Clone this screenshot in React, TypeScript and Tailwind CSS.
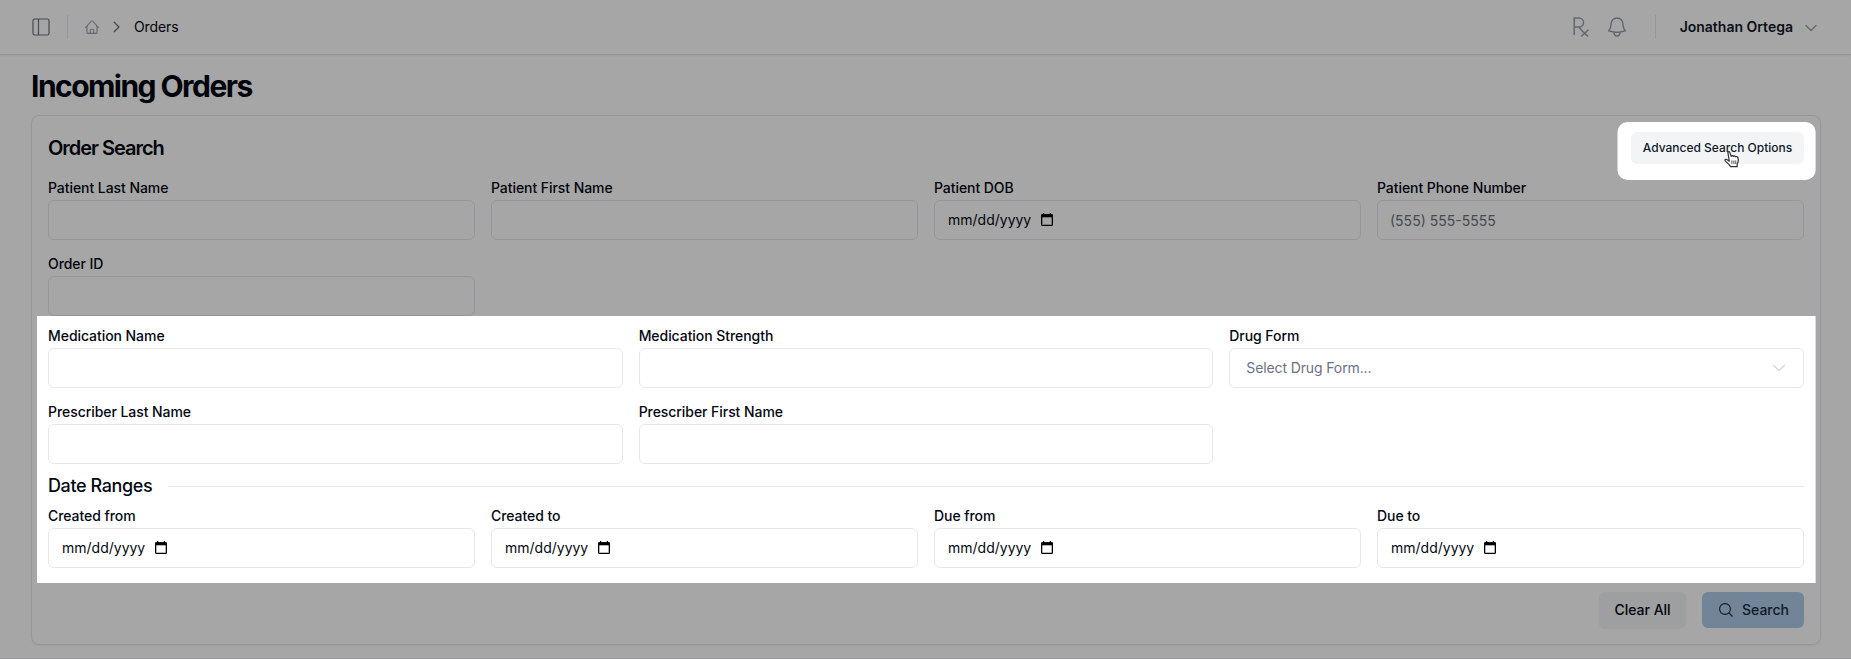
import React from "react";
import { ChevronDown } from "lucide-react";

const boxClass = "flex h-10 w-full items-center rounded-md border border-gray-200 bg-white text-sm";

function Label({ children }: { children: React.ReactNode }) {
  return <label className="h-5 text-sm font-medium leading-5 tracking-[-0.06px]">{children}</label>;
}

function Field({ label, placeholder }: { label: string; placeholder?: string }) {
  return (
    <div className="flex flex-col gap-0.5">
      <Label>{label}</Label>
      <input
        type="text"
        placeholder={placeholder}
        className={boxClass + " px-3 text-gray-950 placeholder:text-gray-500"}
      />
    </div>
  );
}

function DateField({ label }: { label: string }) {
  return (
    <div className="flex flex-col gap-0.5">
      <Label>{label}</Label>
      <div className={boxClass + " pl-[13px]"}>
        <span className="w-[93px] whitespace-nowrap">mm/dd/yyyy</span>
        <svg viewBox="0 0 12 13" className="-mt-px h-[13px] w-3 text-black" fill="none">
          <path d="M2.6 0v2M9.4 0v2" stroke="currentColor" strokeWidth="1.3" />
          <rect x="0.65" y="1.8" width="10.7" height="10.5" rx="0.6" stroke="currentColor" strokeWidth="1.3" />
          <path d="M.6 1.3h10.8v3H.6z" fill="currentColor" />
        </svg>
      </div>
    </div>
  );
}

function PanelIcon() {
  return (
    <svg viewBox="0 0 18 18" className="size-[18px] text-gray-500" fill="none" stroke="currentColor" strokeWidth="1.2">
      <rect x="1" y="1" width="16" height="16" rx="1.8" />
      <path d="M6.5 1v16" />
    </svg>
  );
}

function HomeIcon() {
  return (
    <svg viewBox="0 0 16 16" className="size-4 text-gray-400" fill="none" stroke="currentColor" strokeWidth="1.1" strokeLinecap="round" strokeLinejoin="round">
      <path d="M1.5 8.6 7.4 2a.8.8 0 0 1 1.2 0l5.9 6.6" />
      <path d="M3 7.2v6.2a1 1 0 0 0 1 1h8a1 1 0 0 0 1-1V7.2" />
      <path d="M6.3 14.3v-3a1.1 1.1 0 0 1 1.1-1.1h1.2a1.1 1.1 0 0 1 1.1 1.1v3" />
    </svg>
  );
}

function RxIcon() {
  return (
    <svg viewBox="0 0 16 20" className="h-5 w-4" fill="none" stroke="currentColor" strokeWidth="1.5">
      <path d="M1.2 18V1H6a4.5 4.5 0 0 1 0 9H1.2M6 10l3.6 4.4M8 12.7l7 6.8M15.4 12.7l-7.2 6.8" />
    </svg>
  );
}

function BellIcon() {
  return (
    <svg viewBox="0 0 24 24" className="size-6" fill="none" stroke="currentColor" strokeWidth="1.5" strokeLinecap="round" strokeLinejoin="round">
      <path d="M14.857 17.082a23.85 23.85 0 0 0 5.454-1.31A8.97 8.97 0 0 1 18 9.75V9A6 6 0 0 0 6 9v.75a8.97 8.97 0 0 1-2.312 6.022c1.733.64 3.56 1.085 5.455 1.31m5.714 0a24.3 24.3 0 0 1-5.714 0m5.714 0a3 3 0 1 1-5.714 0" />
    </svg>
  );
}

function HandCursor() {
  return (
    <svg viewBox="0 0 17 18" className="absolute left-[93px] top-[19px] h-[17px] w-4" fill="white" stroke="#333" strokeWidth="1.3" strokeLinejoin="round">
      <path d="M4.2 1.8C3.8.6 5.6.2 6.1 1.4L7.8 5.8C8 4.6 9.6 4.6 10 5.8C10.4 4.8 11.9 5 12.2 6.2C12.8 5.5 14.4 5.8 14.7 7.2C15.6 9.5 15.4 11.5 14 13.6V16.6H7L5.4 14.4L1.3 10.4C.5 9.3 1.8 8.2 3 9.1L5.6 10.8Z" />
      <path d="M8.4 10v3.8M10.5 10v3.8M12.5 10v3.8" strokeWidth=".9" />
    </svg>
  );
}

export default function App() {
  return (
    <div className="relative h-[659px] w-full overflow-hidden bg-white font-['Inter',sans-serif] text-gray-950">
      <header className="flex h-[55px] items-center border-b border-gray-200 pl-8 pr-[30px] shadow-xs">
        <PanelIcon />
        <div className="ml-[17px] h-6 w-px bg-gray-200" />
        <div className="ml-4"><HomeIcon /></div>
        <svg viewBox="0 0 8 12" className="ml-[13px] h-3 w-2 text-gray-500" fill="none" stroke="currentColor" strokeWidth="1.3" strokeLinecap="round" strokeLinejoin="round">
          <path d="m1.2 1.2 4.8 4.8-4.8 4.8" />
        </svg>
        <span className="ml-[13px] text-sm tracking-[-0.1px]">Orders</span>
        <div className="ml-auto flex items-center">
          <div className="text-gray-400"><RxIcon /></div>
          <div className="ml-4 text-gray-400"><BellIcon /></div>
          <div className="ml-[26px] h-6 w-px bg-gray-200" />
          <span className="ml-6 text-sm font-semibold text-gray-900">Jonathan Ortega</span>
          <ChevronDown className="ml-2 mt-0.5 size-5 text-gray-400" strokeWidth={1.6} />
        </div>
      </header>

      <main className="pl-[31px] pr-[30px] pt-3">
        <h1 className="h-12 text-[30px] font-bold leading-[38px] tracking-[-1.54px]">Incoming Orders</h1>

        <section className="h-[530px] rounded-lg border border-gray-200 px-4 pt-4 shadow-xs">
          <div className="flex h-[46px] items-start justify-between">
            <h2 className="text-xl font-semibold leading-8 tracking-[-1.02px]">Order Search</h2>
            <button className="relative h-8 w-[173px] rounded-md bg-gray-100 text-xs font-medium text-gray-900">
              Advanced Search Options
              <HandCursor />
            </button>
          </div>

          <div className="grid grid-cols-4 gap-x-4 gap-y-3.5">
            <Field label="Patient Last Name" />
            <Field label="Patient First Name" />
            <DateField label="Patient DOB" />
            <Field label="Patient Phone Number" placeholder="(555) 555-5555" />
            <Field label="Order ID" />
          </div>

          <div className="mt-2.5 grid grid-cols-3 gap-x-4 gap-y-3.5">
            <Field label="Medication Name" />
            <Field label="Medication Strength" />
            <div className="flex flex-col gap-0.5">
              <Label>Drug Form</Label>
              <button className={boxClass + " justify-between pl-4 pr-[13px] tracking-[-0.12px] text-gray-500"}>
                Select Drug Form...
                <ChevronDown className="size-[22px] text-gray-300" strokeWidth={1.2} />
              </button>
            </div>
            <Field label="Prescriber Last Name" />
            <Field label="Prescriber First Name" />
          </div>

          <div className="mt-2 flex h-7 items-center gap-4">
            <h3 className="text-lg font-medium leading-7 tracking-[-0.4px]">Date Ranges</h3>
            <div className="h-px flex-1 bg-gray-200" />
          </div>

          <div className="mt-1.5 grid grid-cols-4 gap-x-4">
            <DateField label="Created from" />
            <DateField label="Created to" />
            <DateField label="Due from" />
            <DateField label="Due to" />
          </div>

          <div className="mt-6 flex justify-end gap-4">
            <button className="h-9 w-[87px] rounded-md bg-gray-100 text-sm font-medium shadow-xs">Clear All</button>
            <button className="flex h-9 w-[102px] items-center rounded-md bg-[#afcbe8] pl-4 text-sm font-medium text-gray-800">
              <svg viewBox="0 0 16 16" className="size-4" fill="none" stroke="currentColor" strokeWidth="1.1">
                <circle cx="7" cy="7" r="5.4" />
                <path d="m10.9 10.9 3.6 3.6" />
              </svg>
              <span className="ml-2">Search</span>
            </button>
          </div>
        </section>
        <div className="-mx-8 mt-[13px] h-px bg-gray-200" />
      </main>

      <div className="pointer-events-none absolute inset-0 bg-black/35 [clip-path:path(evenodd,'M0_0H1851V659H0ZM37_316H1815.6V583H37ZM1627.5_122H1805.6A10_10_0_0_1_1815.6_132V170A10_10_0_0_1_1805.6_180H1627.5A10_10_0_0_1_1617.5_170V132A10_10_0_0_1_1627.5_122Z')]" />
    </div>
  );
}
